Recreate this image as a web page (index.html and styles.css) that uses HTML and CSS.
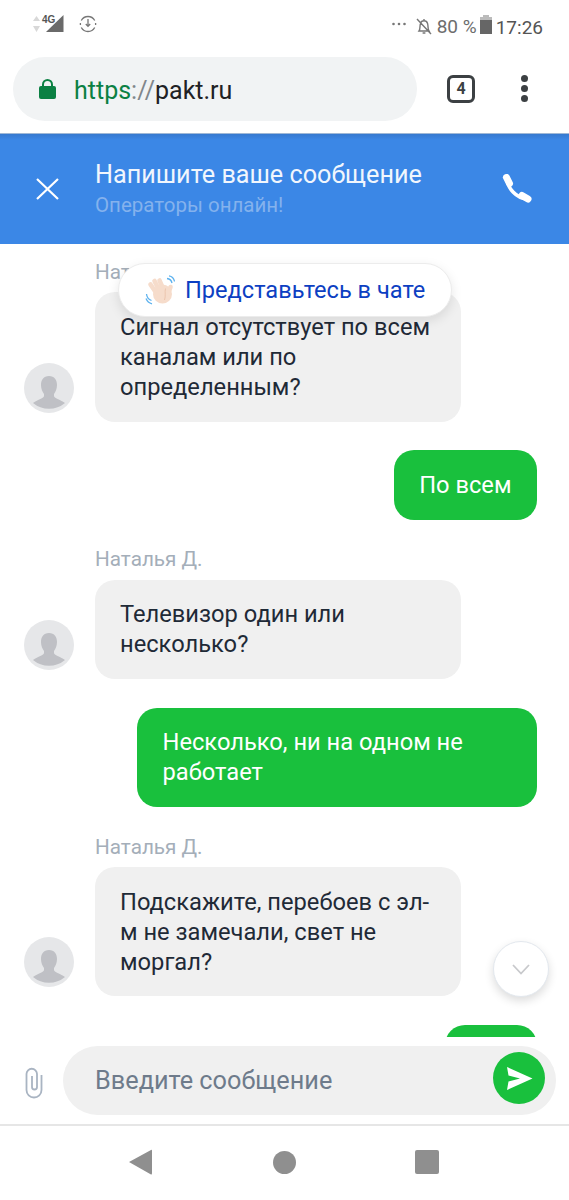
FILE: index.html
```html
<!DOCTYPE html>
<html>

<head>
    <title>Чат</title>
    <link rel="stylesheet" href="styles.css">
</head>

<body>
    <div class="phone">
        <div class="status-bar">
            <div class="status-left">
                <svg class="net-icon" width="31" height="22" viewBox="0 0 31 22">
                    <path d="M0 6 L3.500 1 L7 6 Z M0 11 L7 11 L3.500 17 Z" fill="#d8d8d8" />
                    <path d="M13 17 L30.500 0 V17 Z" fill="#6a6a6a" />
                    <text x="9" y="8" class="net-text">4G</text>
                </svg>
                <svg class="update-icon" width="18" height="18" viewBox="0 0 18 18" fill="none" stroke="#777" stroke-width="1.300">
                    <path d="M2.300 5.500 A7.600 7.600 0 0 1 15.700 5.500 M15.700 12.500 A7.600 7.600 0 0 1 2.300 12.500 M1.400 8 V10 M16.600 8 V10" />
                    <path d="M9 4 V11 M6.800 9 L9 11.400 L11.200 9" />
                </svg>
            </div>
            <div class="status-right">
                <svg class="dots-icon" width="14" height="4" viewBox="0 0 14 4" fill="#777">
                    <circle cx="1.500" cy="2" r="1.300" />
                    <circle cx="7" cy="2" r="1.300" />
                    <circle cx="12.500" cy="2" r="1.300" />
                </svg>
                <svg class="bell-icon" width="16" height="17" viewBox="0 0 16 17" fill="none" stroke="#777" stroke-width="1.400">
                    <path d="M3 13 C4.500 11 3.600 8 4.400 5.600 C5 3.600 6.500 2.800 8 2.800 C9.500 2.800 11 3.600 11.600 5.600 C12.400 8 11.500 11 13 13 Z M8 1 V2.800 M6.600 15 H9.400 M1 1 L15 16" />
                </svg>
                <span class="status-percent">80 %</span>
                <svg class="battery-icon" width="12" height="19" viewBox="0 0 12 19">
                    <rect x="3" y="0" width="6" height="3" fill="#bbb" />
                    <rect x="0" y="2" width="12" height="3" fill="#bbb" />
                    <rect x="0" y="5" width="12" height="14" fill="#666" />
                </svg>
                <span class="status-time">17:26</span>
            </div>
        </div>

        <div class="browser-bar">
            <div class="url-pill">
                <svg class="lock-icon" width="17" height="20" viewBox="0 0 17 20">
                    <path d="M4 8 V5.500 A4.500 4.500 0 0 1 13 5.500 V8" fill="none" stroke="#0b8043" stroke-width="2" />
                    <rect x="0" y="7" width="17" height="13" rx="2" fill="#0b8043" />
                </svg>
                <span class="url-text"><span class="url-https">https</span><span class="url-sep">://</span>pakt.ru</span>
            </div>
            <div class="tabs-count">4</div>
            <div class="browser-menu"><i></i><i></i><i></i></div>
        </div>

        <div class="chat-header">
            <svg class="close-icon" width="23" height="22" viewBox="0 0 23 22" stroke="#fff" stroke-width="2.200">
                <path d="M1 1 L22 21 M22 1 L1 21" />
            </svg>
            <div class="header-text">
                <div class="header-title">Напишите ваше сообщение</div>
                <div class="header-sub">Операторы онлайн!</div>
            </div>
            <svg class="phone-icon" width="30" height="30" viewBox="0 0 30 30" fill="none" stroke="#fff" stroke-linecap="round">
                <path d="M5 5 C5.500 14 14 24 25 25" stroke-width="3.600" />
                <path d="M4.500 3.500 L7.500 9.500" stroke-width="7" />
                <path d="M20 21.500 L26 25" stroke-width="7" />
            </svg>
        </div>

        <div class="chat-area">
            <div class="msg msg-in">
                <svg class="avatar" viewBox="0 0 50 50">
                    <circle cx="25" cy="25" r="25" fill="#e6e7e9" />
                    <path d="M25 13 C19.500 13 17 17 17 22 C17 26 18.500 29 20 31 V33 C20 35 14 36.500 9 40 A25 25 0 0 0 41 40 C36 36.500 30 35 30 33 V31 C31.500 29 33 26 33 22 C33 17 30.500 13 25 13 Z" fill="#bfc0c5" />
                </svg>
                <div class="msg-body">
                    <div class="msg-name">Наталья Д.</div>
                    <div class="bubble">Сигнал отсутствует по всем каналам или по определенным?</div>
                </div>
            </div>
            <div class="msg msg-out">
                <div class="bubble bubble-out">По всем</div>
            </div>
            <div class="msg msg-in">
                <svg class="avatar" viewBox="0 0 50 50">
                    <circle cx="25" cy="25" r="25" fill="#e6e7e9" />
                    <path d="M25 13 C19.500 13 17 17 17 22 C17 26 18.500 29 20 31 V33 C20 35 14 36.500 9 40 A25 25 0 0 0 41 40 C36 36.500 30 35 30 33 V31 C31.500 29 33 26 33 22 C33 17 30.500 13 25 13 Z" fill="#bfc0c5" />
                </svg>
                <div class="msg-body">
                    <div class="msg-name">Наталья Д.</div>
                    <div class="bubble">Телевизор один или несколько?</div>
                </div>
            </div>
            <div class="msg msg-out">
                <div class="bubble bubble-out bubble-wide">Несколько, ни на одном не работает</div>
            </div>
            <div class="msg msg-in">
                <svg class="avatar" viewBox="0 0 50 50">
                    <circle cx="25" cy="25" r="25" fill="#e6e7e9" />
                    <path d="M25 13 C19.500 13 17 17 17 22 C17 26 18.500 29 20 31 V33 C20 35 14 36.500 9 40 A25 25 0 0 0 41 40 C36 36.500 30 35 30 33 V31 C31.500 29 33 26 33 22 C33 17 30.500 13 25 13 Z" fill="#bfc0c5" />
                </svg>
                <div class="msg-body">
                    <div class="msg-name">Наталья Д.</div>
                    <div class="bubble">Подскажите, перебоев с эл-м не замечали, свет не моргал?</div>
                </div>
            </div>
            <div class="msg msg-out">
                <div class="bubble bubble-out bubble-cut"></div>
            </div>

            <div class="intro-pill">
                <svg class="wave-icon" width="30" height="30" viewBox="0 0 30 30">
                    <g fill="none" stroke="#f6dccb" stroke-width="4.600" stroke-linecap="round">
                        <path d="M12 19 L5.500 9.500" />
                        <path d="M15 17 L9.500 6" />
                        <path d="M19 16 L14.500 5.500" />
                        <path d="M23 19 L25.500 12" />
                    </g>
                    <circle cx="17.500" cy="19" r="9.500" fill="#f6dccb" />
                    <path d="M20.500 13.500 C19.500 17 21 21 19.500 25" fill="none" stroke="#e8bfa6" stroke-width="0.800" />
                    <g fill="none" stroke="#5db2ee" stroke-width="1.300">
                        <path d="M22 3.500 C24.500 3.800 26.500 5.500 27 8 M24 .8 C27 1.300 29 3.500 29.500 6.500" />
                        <path d="M1.500 19 C1.800 22 3.500 24.500 6.500 25.500 M1 23.500 C2 26 4 28 7 28.800" />
                    </g>
                </svg>
                <span>Представьтесь в чате</span>
            </div>

            <div class="scroll-down">
                <svg width="18" height="11" viewBox="0 0 18 11" fill="none" stroke="#c8c9cc" stroke-width="1.800">
                    <path d="M1 1 L9 9.500 L17 1" />
                </svg>
            </div>
        </div>

        <div class="input-row">
            <svg class="clip-icon" width="18" height="32" viewBox="0 0 18 32" fill="none" stroke="#a9b4c2" stroke-width="1.800">
                <path d="M16.500 8 V23 A7.500 7.500 0 0 1 1.500 23 V7 A5.250 5.250 0 0 1 12 7 V20 A2.500 2.500 0 0 1 7 20 V9" />
            </svg>
            <div class="input-pill">
                <span class="input-placeholder">Введите сообщение</span>
                <div class="send-btn">
                    <svg width="27" height="25" viewBox="0 0 27 25">
                        <path d="M1 1 L26.500 12.500 L1 24 L2.500 15.500 L14 12.500 L2.500 9.500 Z" fill="#fff" />
                    </svg>
                </div>
            </div>
        </div>

        <div class="nav-bar">
            <svg width="23" height="26" viewBox="0 0 23 26"><path d="M22 1 Q23 0 23 2 V24 Q23 26 22 25.500 L0 13 Z" fill="#8f8f8f" /></svg>
            <svg width="23" height="23" viewBox="0 0 23 23"><circle cx="11.500" cy="11.500" r="11.500" fill="#8f8f8f" /></svg>
            <svg class="nav-square" width="24" height="24" viewBox="0 0 24 24"><rect width="24" height="24" rx="2" fill="#8f8f8f" /></svg>
        </div>
    </div>
</body>

</html>
```

FILE: styles.css
```css
* {
    box-sizing: border-box;
}

body {
    margin: 0;
    background-color: #fff;
    font-family: Roboto, "Noto Sans", sans-serif;
}

.phone {
    display: flex;
    flex-direction: column;
    width: 569px;
    height: 1200px;
    overflow: hidden;
}

/* Status bar */
.status-bar {
    display: flex;
    justify-content: space-between;
    align-items: center;
    height: 46px;
    padding: 6px 26px 0 33px;
    color: #6d6d6d;
}

.status-left,
.status-right {
    display: flex;
    align-items: center;
}

.net-icon {
    margin-right: 15px;
}

.update-icon {
    margin-bottom: 4px;
}

.net-text {
    font-family: "Liberation Sans", Roboto, sans-serif;
    font-size: 10px;
    font-weight: bold;
    fill: #555;
}

.dots-icon {
    margin-right: 10px;
    margin-bottom: 4px;
}

.bell-icon {
    margin-right: 5px;
}

.status-percent {
    font-size: 19px;
    margin-right: 3px;
}

.battery-icon {
    margin-bottom: 3px;
}

.status-time {
    font-size: 19px;
    margin-left: 4px;
    margin-top: 2px;
    color: #555;
}

/* Browser bar */
.browser-bar {
    display: flex;
    align-items: center;
    height: 87px;
    padding: 0 0 0 13px;
    background-color: #fff;
}

.url-pill {
    display: flex;
    align-items: center;
    width: 404px;
    height: 64px;
    padding-left: 26px;
    margin-top: -2px;
    border-radius: 32px;
    background-color: #f1f3f4;
}

.lock-icon {
    margin-right: 18px;
}

.url-text {
    margin-top: 3px;
    font-size: 25px;
    color: #202124;
}

.url-https {
    color: #0b8043;
}

.url-sep {
    color: #80868b;
}

.tabs-count {
    display: flex;
    align-items: center;
    justify-content: center;
    width: 28px;
    height: 28px;
    margin-left: 30px;
    margin-top: -2px;
    border: 3px solid #3c4043;
    border-radius: 6px;
    font-size: 16px;
    font-weight: bold;
    color: #3c4043;
}

.browser-menu {
    display: flex;
    flex-direction: column;
    gap: 3px;
    margin-left: 46px;
    margin-top: -2px;
}

.browser-menu i {
    display: block;
    width: 7px;
    height: 7px;
    border-radius: 50%;
    background-color: #3c4043;
}

/* Chat header */
.chat-header {
    display: flex;
    align-items: center;
    height: 111px;
    padding-left: 36px;
    background-color: #3b87e6;
    background-image: linear-gradient(#3679cf, #3b87e6 6px);
    border-top: 1px solid #9fb8d6;
}

.close-icon {
    margin-right: 36px;
}

.header-text {
    width: 407px;
}

.header-title {
    font-size: 25.200px;
    line-height: 30px;
    margin-top: -2px;
    color: #f1f6fd;
}

.header-sub {
    font-size: 20.500px;
    line-height: 24px;
    margin-top: 3px;
    color: #84b2ed;
}

/* Messages */
.chat-area {
    position: relative;
    flex: 1;
    padding-top: 17px;
    overflow: hidden;
}

.msg {
    display: flex;
    margin-bottom: 28.600px;
}

.msg-in {
    align-items: flex-end;
    padding-left: 24px;
}

.msg-out {
    justify-content: flex-end;
    padding-right: 32px;
}

.avatar {
    flex: none;
    width: 50px;
    height: 50px;
    margin-right: 21px;
    margin-bottom: 9px;
}

.msg-body {
    width: 366px;
}

.msg-name {
    font-size: 20.700px;
    line-height: 22px;
    margin-bottom: 9.400px;
    color: #a4aeb9;
}

.bubble {
    padding: 19.700px 25px;
    border-radius: 20px;
    font-size: 23.700px;
    line-height: 30px;
    color: #1f2a37;
    background-color: #f0f0f0;
}

.bubble-out {
    padding: 19.700px 25.500px;
    color: #fff;
    background-color: #19c03d;
}

.bubble-wide {
    width: 400px;
}

.bubble-cut {
    width: 92px;
    height: 69.400px;
}

/* Overlays */
.intro-pill {
    position: absolute;
    top: 19px;
    left: 118px;
    display: flex;
    align-items: center;
    width: 334px;
    height: 54px;
    padding-left: 26px;
    border: 1px solid #ececec;
    border-radius: 27px;
    background-color: #fff;
    box-shadow: 0 4px 12px rgba(0, 0, 0, 0.1);
    font-size: 23.600px;
    color: #0d3fc2;
}

.wave-icon {
    margin-right: 10px;
}

.scroll-down {
    position: absolute;
    top: 697px;
    left: 493px;
    display: flex;
    align-items: center;
    justify-content: center;
    width: 56px;
    height: 56px;
    border: 1px solid #e3e8ee;
    border-radius: 50%;
    background-color: #fff;
    box-shadow: 0 4px 10px rgba(0, 0, 0, 0.14);
}

/* Input */
.input-row {
    display: flex;
    align-items: flex-start;
    flex: none;
    height: 89px;
    padding: 9px 13px 0 25px;
    border-bottom: 2px solid #e6e6e6;
}

.clip-icon {
    flex: none;
    margin-right: 20px;
    margin-top: 21px;
}

.input-pill {
    display: flex;
    align-items: center;
    justify-content: space-between;
    flex: 1;
    height: 69px;
    padding: 0 11px 0 32px;
    border-radius: 35px;
    background-color: #f0f0f0;
}

.input-placeholder {
    font-size: 25.300px;
    margin-bottom: 1px;
    color: #6e7b8b;
}

.send-btn {
    display: flex;
    align-items: center;
    justify-content: center;
    width: 52px;
    height: 52px;
    margin-bottom: 5px;
    border-radius: 50%;
    background-color: #19c03d;
}

/* Nav bar */
.nav-bar {
    display: flex;
    align-items: center;
    flex: none;
    height: 74px;
    padding-left: 129px;
    padding-bottom: 2px;
    gap: 121px;
}

.nav-square {
    margin-left: -2px;
}
```
